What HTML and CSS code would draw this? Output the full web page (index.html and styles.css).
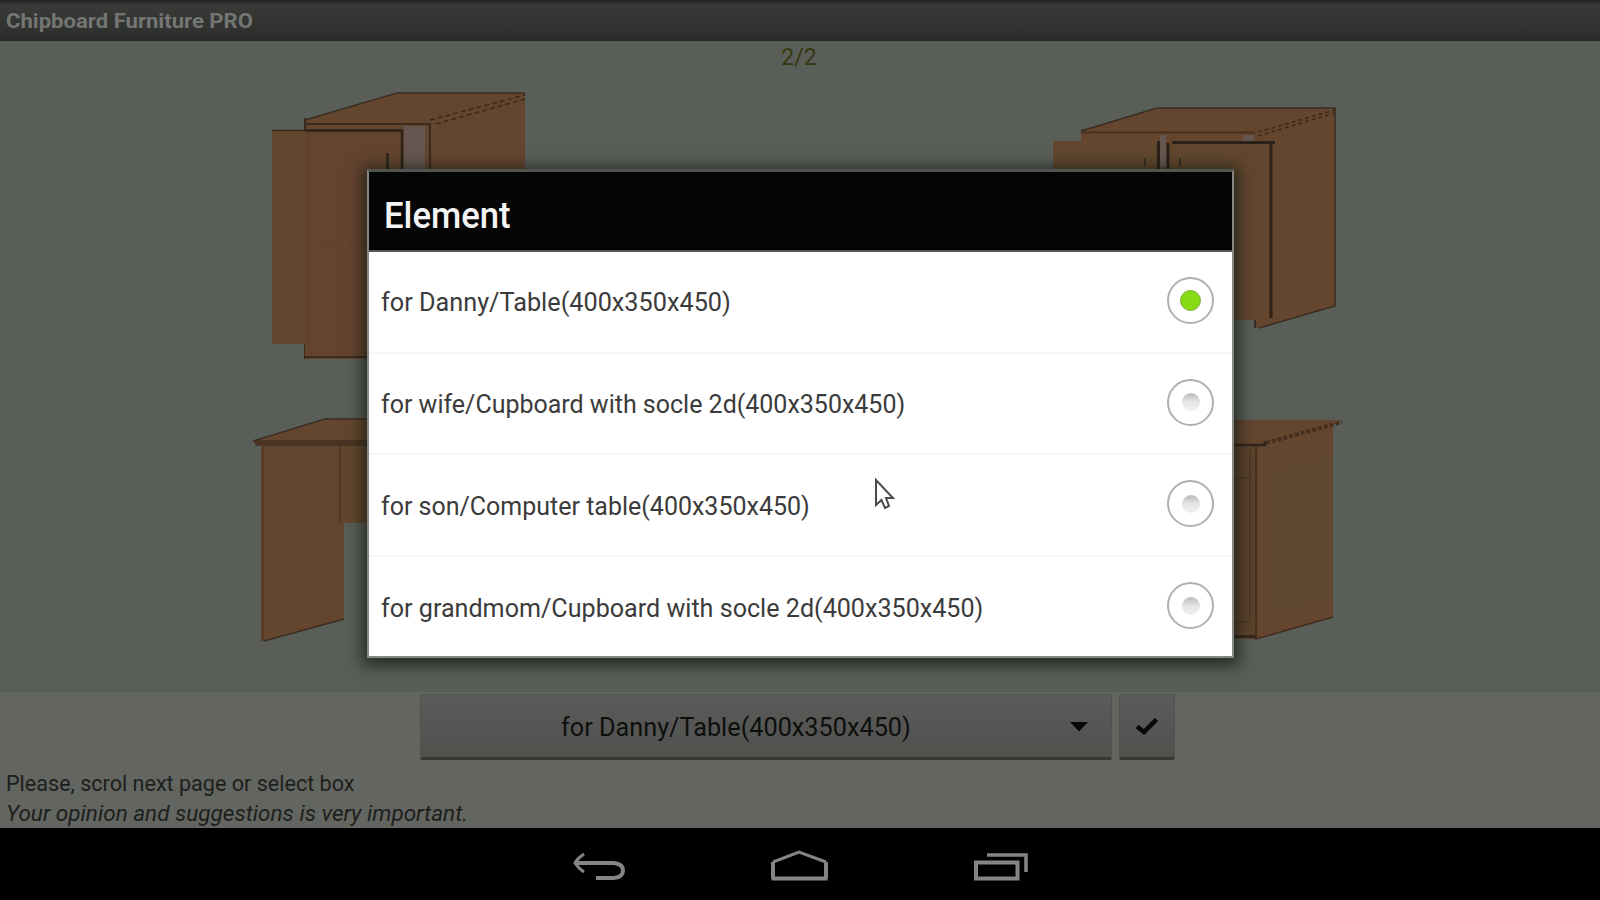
FILE: index.html
```html
<!DOCTYPE html>
<html lang="en">
<head>
<meta charset="utf-8">
<title>Chipboard Furniture PRO</title>
<link rel="stylesheet" href="styles.css">
</head>
<body>
<div class="screen">
  <header class="titlebar"><span class="fit title">Chipboard Furniture PRO</span></header>
  <main class="gallery">
    <svg class="furniture" width="1600" height="651" viewBox="0 41 1600 651">
      <g stroke-width="1.5" stroke-linejoin="round">
        <path fill="#64462f" d="M305 120 397 93H525V300L430 359H305Z"/>
        <path fill="none" stroke="#3b2d22" d="M305 120 397 93H525"/>
        <path fill="none" stroke="#3b2a1e" stroke-width="2" d="M305 124H430V175M305 118V359M305 357H375"/>
        <path fill="#655750" d="M404 126h21v50h-21z"/>
        <path fill="#61482e" d="M272 130h33v214h-33z"/>
        <path fill="#64442f" d="M305 131h97v225h-97z"/>
        <path fill="none" stroke="#3a2a1e" stroke-width="1.5" d="M272 130.500H305"/>
        <path fill="none" stroke="#2c2119" stroke-width="2.5" d="M305 130.500H402V175"/>
        <path fill="none" stroke="#26241f" stroke-width="2.500" d="M387.500 153v18"/>
        <path fill="none" stroke="#3a291c" stroke-dasharray="5 3" d="M430 120 525 95M436 124 525 99"/>
        <path fill="none" stroke="#594029" stroke-width="1" d="M307 132V343M318 245h50"/>
      </g>
      <g stroke-width="1.500">
        <path fill="#64462f" d="M1081 131 1157 108H1335V306L1259 328H1255V320H1200V170H1081Z"/>
        <path fill="none" stroke="#3b2d22" d="M1081 131 1157 108H1335V306L1259 328"/>
        <path fill="none" stroke="#46301f" stroke-width="2" d="M1081 132.500H1255"/>
        <path fill="#61472d" d="M1053 141h105v30h-105zM1171 143h72v177h-72z"/>
        <path fill="#655750" d="M1160 135h6v32h-6zM1243 135h11v6h-11z"/>
        <path fill="none" stroke="#2c2119" stroke-width="3" d="M1158.500 141V170M1168 143V170M1172 142.500H1275M1271 143V318"/>
        <path fill="none" stroke="#3a291c" stroke-dasharray="4 3" d="M1258 132 1335 110M1258 136 1335 113"/>
        <path fill="none" stroke="#292620" d="M1145 158v8M1180 158v8M1255 320V328"/>
      </g>
      <g stroke-width="1.500">
        <path fill="#61472d" d="M341 445h30v78h-30z"/>
        <path fill="#64462f" d="M253 441 325 419H371V446H344V619L264 641H261V446Z"/>
        <path fill="#4c3423" d="M253 440H371V446H256Z"/>
        <path fill="none" stroke="#3b2d22" d="M253 441 325 419H371M264 641 344 619"/>
        <path fill="none" stroke="#573a25" stroke-width="2.500" d="M263 446V641M340 446V523"/>
      </g>
      <g stroke-width="1.500">
        <path fill="#5d432c" d="M1230 445h27v194h-27z"/>
        <path fill="#64462f" d="M1230 420H1342L1333 425V617L1257 639V446H1230Z"/>
        <path fill="#61492f" d="M1270 470 1330 455V604L1270 610Z"/>
        <path fill="none" stroke="#32241a" stroke-width="2.500" d="M1230 445H1265V441M1230 636.500h27"/>
        <path fill="none" stroke="#3f2c1d" d="M1256 446V639L1333 617"/>
        <path fill="none" stroke="#4d3623" d="M1230 478h22M1230 622h20M1250 450V620"/>
        <path fill="none" stroke="#452f1f" stroke-width="4" stroke-dasharray="4 2" d="M1266 443 1342 422"/>
      </g>
    </svg>
    <span class="page-count">2/2</span>
  </main>
  <section class="controls">
    <div class="picker">
      <div class="spinner">
        <span class="spinner-text"><span class="fit opt">for Danny/Table(400x350x450)</span></span>
        <svg class="caret" width="20" height="11" viewBox="0 0 20 11"><path d="M1 1H19L10 10.500Z" fill="#070907"/></svg>
      </div>
      <div class="confirm">
        <svg width="24" height="17" viewBox="0 0 24 17"><path d="M2 8.500 9 14 21.500 1.500" fill="none" stroke="#080a08" stroke-width="4.500"/></svg>
      </div>
    </div>
    <p class="note"><span class="fit n1">Please, scrol next page or select box</span></p>
    <p class="note slant"><span class="fit n2">Your opinion and suggestions is very important.</span></p>
  </section>
  <nav class="navbar">
    <svg width="1600" height="72" viewBox="0 828 1600 72" fill="none" stroke="#858585" stroke-width="4">
      <path d="M577 863H614Q623 864 623 870.500T614 878H596"/><path stroke-width="3" d="M584 854Q577 859 575 863 578 868 584 872"/>
      <path d="M773 878.500V862M826 862V878.500M771.500 878.500H827.500"/><path stroke-width="3" d="M773 862 799 852 826 862"/>
      <path d="M976 862.500H1017.500V878.500H976Z"/><path stroke-width="3.500" d="M987 855H1026V872"/>
    </svg>
  </nav>
  <div class="dialog">
    <h1 class="dialog-title"><span class="fit el">Element</span></h1>
    <ul class="list">
      <li class="row"><span class="fit r1">for Danny/Table(400x350x450)</span><i class="radio on"></i></li>
      <li class="row"><span class="fit r2">for wife/Cupboard with socle 2d(400x350x450)</span><i class="radio"></i></li>
      <li class="row"><span class="fit r3">for son/Computer table(400x350x450)</span><i class="radio"></i></li>
      <li class="row"><span class="fit r4">for grandmom/Cupboard with socle 2d(400x350x450)</span><i class="radio"></i></li>
    </ul>
  </div>
  <svg class="cursor" width="22" height="34" viewBox="0 0 22 34"><path d="M2 3V28L7.500 23 11 31 15 29 12 21H19Z" fill="#fff" stroke="#4a4a4a" stroke-width="2"/></svg>
</div>
</body>
</html>
```
FILE: styles.css
```css
* { box-sizing: border-box; }
body, h1, ul, p { margin: 0; padding: 0; }
body { font-family: Roboto, "Liberation Sans", sans-serif; background: #000; }
.screen { position: relative; width: 1600px; height: 900px; overflow: hidden; display: flex; flex-direction: column; }
.fit { display: inline-block; white-space: nowrap; transform-origin: 0 50%; }
.title { transform: scaleX(1.052); }
.el { transform: scaleX(.963); }
.r1, .opt { transform: scaleX(.971); }
.r2 { transform: scaleX(.961); }
.r3 { transform: scaleX(.961); }
.r4 { transform: scaleX(.966); }
.n1 { transform: scaleX(.98); }
.n2 { transform: scaleX(1.023); }
.titlebar { height: 41px; padding: 0 0 0 6px; display: flex; align-items: center; background: linear-gradient(#20221f 0, #3a3b39 5px, #2d2f2c 38px, #262825 41px); color: #737672; font-size: 21px; font-weight: 700; }
.gallery { position: relative; height: 651px; background: #5a5e59; }
.furniture { display: block; }
.page-count { position: absolute; left: 0; right: 2px; top: 4px; text-align: center; font-size: 23px; line-height: 26px; color: #35390f; }
.controls { height: 136px; padding-top: 2px; background: #636561; color: #1d1f1d; }
.picker { display: flex; gap: 7px; margin-left: 420px; height: 66px; margin-bottom: 9px; }
.spinner, .confirm { display: flex; align-items: center; background: linear-gradient(#5b5b5a, #50524e); border: 1px solid #50524f; border-bottom: 3px solid #363835; border-radius: 2px; }
.spinner { width: 692px; padding: 1px 22px 0 0; color: #0d0f0d; font-size: 26px; }
.spinner-text { flex: 1; padding-left: 140px; }
.confirm { width: 56px; justify-content: center; }
.note { height: 30px; line-height: 30px; padding-left: 6px; font-size: 22px; }
.slant { font-style: italic; }
.navbar { height: 72px; background: #000; }
.navbar svg { display: block; }
.dialog { position: absolute; left: 367px; top: 169px; width: 867px; height: 489px; border: 2px solid #858885; border-top: 3px solid #50534f; background: #fff; box-shadow: 0 3px 14px 5px rgba(20, 24, 18, .7); }
.dialog-title { height: 80px; padding: 9px 0 0 15px; display: flex; align-items: center; background: #050505; border-bottom: 2px solid #555; color: #f4f4f4; font-size: 36px; font-weight: 500; }
.list { list-style: none; }
.row { height: 101.700px; padding: 1px 18px 0 12px; display: flex; align-items: center; justify-content: space-between; border-bottom: 2px solid #f6f6f6; color: #3b3b3b; font-size: 26px; }
.row:last-child { border-bottom: 0; padding-top: 0; }
.radio { width: 47px; height: 47px; margin-top: -4px; border: 2px solid #b0b0b0; border-radius: 50%; display: grid; place-items: center; }
.radio::after { content: ""; width: 18px; height: 18px; border-radius: 50%; background: linear-gradient(#b8b8b8, #e6e6e6 50%, #f0f0f0); }
.radio.on::after { width: 19px; height: 19px; background: #86dc14; border: 1px solid #7dab40; }
.cursor { position: absolute; left: 874px; top: 477px; }
```
